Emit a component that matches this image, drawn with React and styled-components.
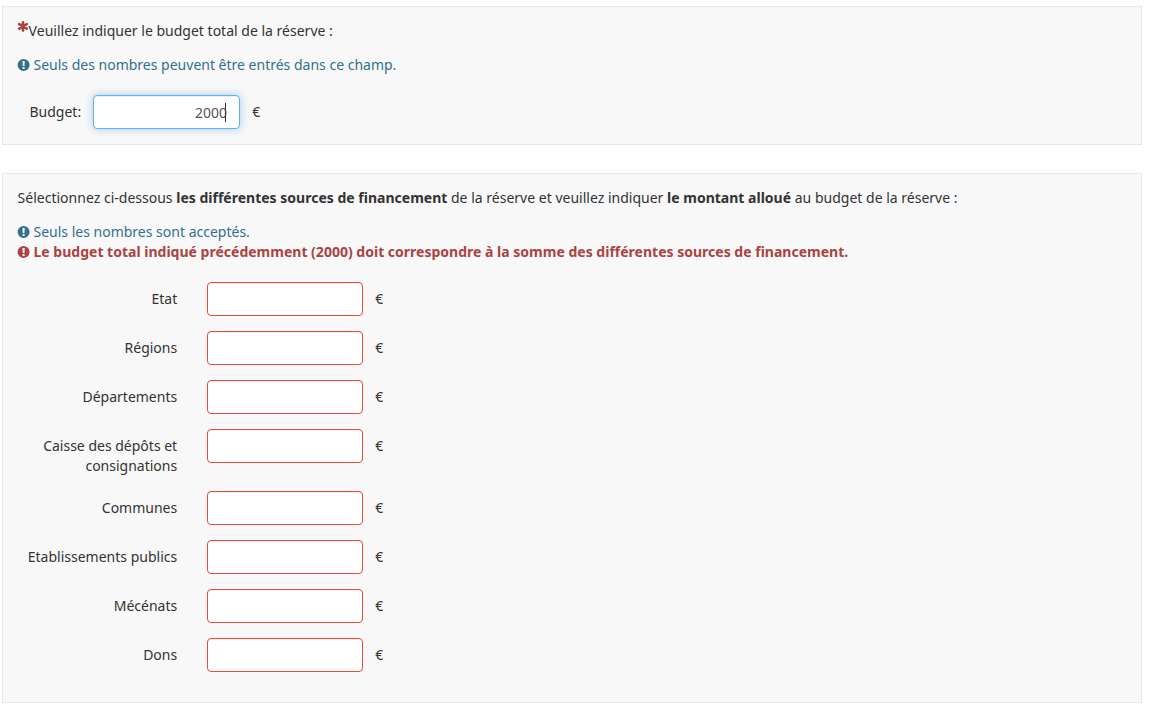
import React, { useState } from "react"
import styled, { createGlobalStyle } from "styled-components"

/**
 * STYLES
 */
const GlobalStyle = createGlobalStyle`
  * {
    box-sizing: border-box;
  }

  body {
    margin: 0;
    background: white;
    color: #333;
    font-family: "Noto Sans", sans-serif;
    font-size: 14px;
    line-height: 20px;
  }
`;

const Page = styled.main`
  width: 1142px;
  padding: 6px 0 0 2px;
`;

const Panel = styled.section`
  height: ${props => props.$height}px;
  margin-bottom: 28px;
  padding: 14px;
  background: #f8f8f8;
  border: 1px solid #e7e7e7;
`;

const Question = styled.p`
  display: flex;
  margin: 0 0 14px;
  padding-left: ${props => props.$required ? 0 : 0.6}px;
  white-space: pre;
  letter-spacing: 0.007px;
`;

const Required = styled.svg`
  width: 12px;
  height: 12px;
  margin-right: -0.4px;
`;

const Help = styled.div`
  display: flex;
  align-items: center;
  gap: 3.5px;
  height: 20px;
  color: ${props => props.$error ? '#a94442' : '#31708f'};
  font-weight: ${props => props.$error ? 700 : 400};
  letter-spacing: ${props => props.$error ? '0.007px' : 'normal'};

  svg {
    width: 13px;
    height: 12px;
    fill: currentColor;
  }
`;

const BudgetRow = styled.div`
  display: flex;
  align-items: flex-start;
  margin-top: 20px;
  padding-left: 12.5px;
`;

const BudgetLabel = styled.label`
  width: 63.5px;
  padding-top: 7px;
`;

const Field = styled.div`
  position: relative;
  display: flex;
`;

const Input = styled.input`
  width: ${props => props.$width}px;
  height: 34px;
  padding: 6px 12px;
  background: white;
  border: 1px solid ${props => props.$invalid ? '#e74c3c' : '#66afe9'};
  border-radius: 4px;
  outline: none;
  box-shadow: ${props => props.$invalid
    ? 'inset 0 1px 1px rgba(0, 0, 0, 0.075)'
    : 'inset 0 1px 1px rgba(0, 0, 0, 0.075), 0 0 8px rgba(102, 175, 233, 0.6)'};
  color: #555;
  font: inherit;
  text-align: right;
`;

const Caret = styled.span`
  position: absolute;
  top: 8px;
  right: 14px;
  width: 1px;
  height: 19px;
  background: #333;
`;

const Suffix = styled.span`
  padding: 7px 0 0 12.3px;
`;

const Sources = styled.div`
  display: flex;
  flex-direction: column;
  gap: 15px;
  margin-top: 20px;
`;

const SourceRow = styled.div`
  display: flex;
  align-items: flex-start;
`;

const SourceLabel = styled.label`
  width: 160.2px;
  margin-right: 29.8px;
  padding-top: 7px;
  text-align: right;
`;

/**
 * CODE
 */
const SOURCES = [
  'Etat',
  'Régions',
  'Départements',
  'Caisse des dépôts et consignations',
  'Communes',
  'Etablissements publics',
  'Mécénats',
  'Dons',
];

const Asterisk = () => (
  <Required viewBox="0 0 12 12">
    <g stroke="#a94442" strokeWidth="2.6" strokeLinecap="round">
      <path d="M6 1.2v8.4M2.2 3.2l7.6 4.4M9.8 3.2L2.2 7.6" />
    </g>
  </Required>
)

const ExclamationCircle = () => (
  <svg viewBox="-0.6 0 13 12">
    <path fillRule="evenodd" d="M6 0a6 6 0 1 1 0 12a6 6 0 0 1 0-12zM4.9 1.9l.2 5.2h1.8l.2-5.2zM5 8.1v1.9h2V8.1z" />
  </svg>
)

const App = () => {
  const [budget, setBudget] = useState('2000');

  return (
    <Page>
      <GlobalStyle />

      <Panel $height={139}>
        <Question $required><Asterisk />Veuillez indiquer le budget total de la réserve :</Question>
        <Help><ExclamationCircle />Seuls des nombres peuvent être entrés dans ce champ.</Help>
        <BudgetRow>
          <BudgetLabel htmlFor="budget">Budget:</BudgetLabel>
          <Field>
            <Input id="budget" $width={147} value={budget} onChange={e => setBudget(e.target.value)} />
            <Caret />
          </Field>
          <Suffix>€</Suffix>
        </BudgetRow>
      </Panel>

      <Panel $height={530}>
        <Question>
          Sélectionnez ci-dessous <b>les différentes sources de financement</b> de la réserve et veuillez indiquer <b>le montant alloué</b> au budget de la réserve :
        </Question>
        <Help><ExclamationCircle />Seuls les nombres sont acceptés.</Help>
        <Help $error>
          <ExclamationCircle />Le budget total indiqué précédemment (2000) doit correspondre à la somme des différentes sources de financement.
        </Help>
        <Sources>
          {SOURCES.map((source, index) => (
            <SourceRow key={source}>
              <SourceLabel htmlFor={`source-${index}`}>{source}</SourceLabel>
              <Input id={`source-${index}`} $width={156} $invalid />
              <Suffix>€</Suffix>
            </SourceRow>
          ))}
        </Sources>
      </Panel>
    </Page>
  )
}

export default App;
